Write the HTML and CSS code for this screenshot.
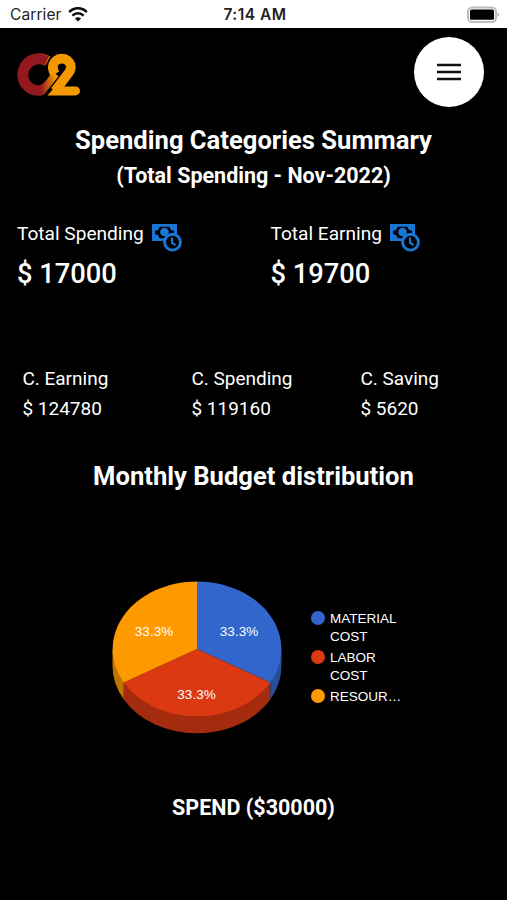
FILE: index.html
```html
<!DOCTYPE html>
<html lang="en">
<head>
    <meta charset="UTF-8">
    <meta name="viewport" content="width=device-width, initial-scale=1.0">
    <title>Spending Summary</title>
    <link rel="stylesheet" href="styles.css">
</head>
<body>
    <div class="status-bar">
        <div class="carrier">
            <span>Carrier</span>
            <svg class="wifi" viewBox="0 0 20 15" width="20" height="15">
                <path d="M1.2 5.2C6-.1 14-.1 18.8 5.2" fill="none" stroke="#111" stroke-width="2.6"/>
                <path d="M4.4 8.7c3.2-3.3 8-3.3 11.2 0" fill="none" stroke="#111" stroke-width="2.5"/>
                <path d="M10 14.6l-3.1-3.2c1.7-1.7 4.5-1.7 6.2 0z" fill="#111"/>
            </svg>
        </div>
        <div class="time">7:14 AM</div>
        <div class="battery-wrap">
            <svg class="battery" viewBox="0 0 34 18" width="34" height="18">
                <rect x="2" y="1.4" width="28" height="14.6" rx="4.2" fill="#fff" stroke="#bdbdbd" stroke-width="2"/>
                <rect x="4" y="3.6" width="24" height="10.2" rx="1.6" fill="#000"/>
                <path d="M31.6 6.6c1.8.7 1.8 3.5 0 4.2z" fill="#aaa"/>
            </svg>
        </div>
    </div>

    <header class="header">
        <svg class="logo" viewBox="0 0 66 46" width="66" height="46">
            <defs>
                <linearGradient id="ring" x1="22" y1="26" x2="40" y2="24" gradientUnits="userSpaceOnUse">
                    <stop offset="0.15" stop-color="#93191f"/>
                    <stop offset="1" stop-color="#f39800"/>
                </linearGradient>
            </defs>
            <path d="M33 9.500A16 16 0 1 0 23.500 38.500C32 38.500 35 31 42 23" fill="none" stroke="url(#ring)" stroke-width="10.500"/>
            <path d="M31.500 9A16 16 0 0 0 11 32.500" fill="none" stroke="#93191f" stroke-width="10.500"/>
            <path d="M38 16A9 9 0 0 1 47 5.500A9.300 9.300 0 0 1 54.500 20L39.500 39H50" fill="none" stroke="#000" stroke-width="12"/>
            <path d="M40 22C37.500 18 37.500 15 38.200 12.500A9.300 9.300 0 0 1 55.500 12.500Q56.500 17 54 20.500L40 39" fill="none" stroke="#f39800" stroke-width="9.600"/>
            <path d="M43 34.400H60.500a4.500 4.500 0 0 1 0 9H32.500L40 34.400z" fill="#f39800"/>
        </svg>
        <button class="menu-btn" aria-label="Menu">
            <svg viewBox="0 0 24 18" width="24" height="18">
                <path d="M0 2h24M0 9h24M0 16h24" stroke="#111" stroke-width="2.4"/>
            </svg>
        </button>
    </header>

    <svg class="sprite" width="0" height="0">
        <symbol id="money-clock" viewBox="0 0 30 28">
            <path fill="#1976d2" fill-rule="evenodd" d="M0 0h25v17H0zM7.500 2.800A4.500 4.500 0 0 1 3 6.800v3.400a4.500 4.500 0 0 1 4.500 4h10a4.500 4.500 0 0 1 4.500-4V6.800a4.500 4.500 0 0 1-4.500-4z"/>
            <circle cx="12.500" cy="8" r="4.300" fill="#1976d2"/>
            <circle cx="20.500" cy="18.200" r="7.900" fill="#000" stroke="#1976d2" stroke-width="2.900"/>
            <path d="M20 13.500v5.300l3.600 2.400" fill="none" stroke="#1976d2" stroke-width="2.200"/>
        </symbol>
    </svg>

    <main>
        <h1 class="title">Spending Categories Summary</h1>
        <h2 class="subtitle">(Total Spending - Nov-2022)</h2>

        <section class="totals">
            <div class="total">
                <div class="total-label">
                    <span>Total Spending</span>
                    <svg width="30" height="28"><use href="#money-clock"/></svg>
                </div>
                <div class="total-value">$ 17000</div>
            </div>
            <div class="total">
                <div class="total-label">
                    <span>Total Earning</span>
                    <svg width="30" height="28"><use href="#money-clock"/></svg>
                </div>
                <div class="total-value">$ 19700</div>
            </div>
        </section>

        <section class="cumulative">
            <div class="item">
                <p>C. Earning</p>
                <p>$ 124780</p>
            </div>
            <div class="item">
                <p>C. Spending</p>
                <p>$ 119160</p>
            </div>
            <div class="item">
                <p>C. Saving</p>
                <p>$ 5620</p>
            </div>
        </section>

        <h2 class="chart-title">Monthly Budget distribution</h2>

        <section class="chart">
            <svg class="pie" viewBox="0 0 170 153" width="170" height="153">
                <!-- sides -->
                <path d="M.5 68v17A84.500 67.500 0 0 0 11.800 118.500v-17z" fill="#bf7300"/>
                <path d="M169.500 68v17A84.500 67.500 0 0 1 158.200 118.500v-17z" fill="#264d99"/>
                <path d="M11.800 101.500v17A84.500 67.500 0 0 0 158.200 118.500v-17z" fill="#a52b0e"/>
                <!-- slices -->
                <path d="M85 68V.5A84.500 67.500 0 0 1 158.200 101.500z" fill="#3366cc"/>
                <path d="M85 68L158.200 101.500A84.500 67.500 0 0 1 11.800 101.500z" fill="#dc3912"/>
                <path d="M85 68L11.800 101.500A84.500 67.500 0 0 1 85 .5z" fill="#ff9900"/>
                <g class="pie-text">
                    <text x="127" y="54.500">33.3%</text>
                    <text x="84.500" y="117.500">33.3%</text>
                    <text x="42" y="54.500">33.3%</text>
                </g>
            </svg>
            <ul class="legend">
                <li><span class="dot blue"></span><span>MATERIAL<br>COST</span></li>
                <li><span class="dot red"></span><span>LABOR<br>COST</span></li>
                <li><span class="dot orange"></span><span>RESOUR…</span></li>
            </ul>
        </section>

        <h3 class="spend">SPEND ($30000)</h3>
    </main>
</body>
</html>
```
FILE: styles.css
```css
* {
    box-sizing: border-box;
}

body {
    margin: 0;
    height: 900px;
    overflow: hidden;
    background-color: #000;
    color: #fff;
    font-family: Roboto, sans-serif;
}

h1, h2, h3, p, ul {
    margin: 0;
    padding: 0;
}

.status-bar {
    display: grid;
    grid-template-columns: 1fr auto 1fr;
    align-items: center;
    height: 28px;
    padding: 1px 7px 0 10px;
    background-color: #fff;
    color: #222;
    font-family: Inter, sans-serif;
    font-size: 15.5px;
}

.carrier {
    display: flex;
    align-items: center;
    gap: 6px;
    letter-spacing: 0.1px;
}

.time {
    font-weight: 600;
    letter-spacing: 0.5px;
}

.battery-wrap {
    display: flex;
    justify-content: flex-end;
}

.header {
    display: flex;
    justify-content: space-between;
    align-items: flex-start;
    height: 92px;
    padding: 9px 23px 0 15px;
}

.logo {
    margin-top: 15px;
}

.menu-btn {
    display: flex;
    align-items: center;
    justify-content: center;
    width: 70px;
    height: 70px;
    padding: 0;
    border: none;
    border-radius: 50%;
    background-color: #fff;
}

.sprite {
    display: block;
}

.title,
.chart-title {
    font-size: 25.6px;
    line-height: 40px;
    font-weight: 700;
    text-align: center;
}

.subtitle {
    margin-top: 1px;
    font-size: 21.5px;
    line-height: 30px;
    font-weight: 700;
    text-align: center;
}

.totals {
    display: grid;
    grid-template-columns: 1fr 1fr;
    margin-top: 28px;
    padding-left: 17px;
    column-gap: 17px;
}

.total-label {
    display: flex;
    gap: 8px;
    height: 34px;
    font-size: 19.1px;
    line-height: 30px;
}

.total-label svg {
    margin-top: 5px;
}

.total-value {
    font-size: 27.3px;
    line-height: 42px;
    font-weight: 500;
}

.cumulative {
    display: grid;
    grid-template-columns: 169px 169px 1fr;
    margin-top: 69px;
    padding-left: 22.4px;
    font-size: 19px;
    line-height: 30px;
}

.chart-title {
    margin-top: 32px;
}

.chart {
    display: flex;
    align-items: flex-start;
    height: 200px;
    margin-top: 85px;
    padding-left: 112px;
}

.pie-text {
    fill: #fff;
    font-family: "Liberation Sans", Arial, sans-serif;
    font-size: 13.5px;
    text-anchor: middle;
}

.legend {
    display: flex;
    flex-direction: column;
    gap: 4px;
    margin: 29px 0 0 29px;
    list-style: none;
    font-family: "Liberation Sans", Arial, sans-serif;
    font-size: 13.5px;
    line-height: 17.5px;
}

.legend li {
    display: flex;
    gap: 5px;
}

.dot {
    width: 14px;
    height: 14px;
    margin-top: 1px;
    border-radius: 50%;
}

.blue {
    background-color: #3366cc;
}

.red {
    background-color: #dc3912;
}

.orange {
    background-color: #ff9900;
}

.spend {
    margin-top: 12px;
    font-size: 21.5px;
    line-height: 30px;
    font-weight: 700;
    text-align: center;
}
```
